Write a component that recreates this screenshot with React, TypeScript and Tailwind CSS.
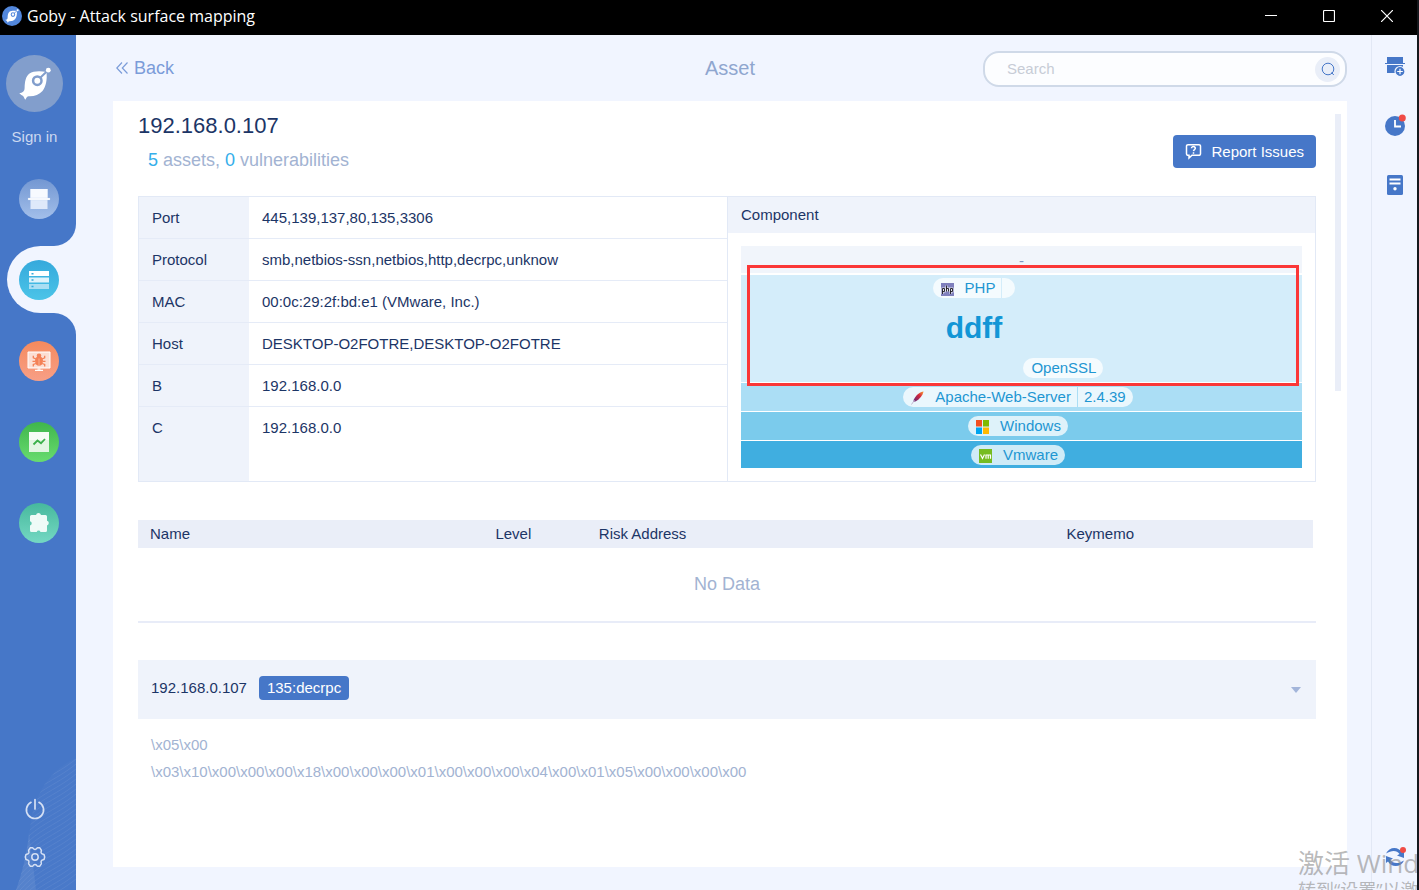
import { useState } from "react";
import type { ReactNode } from "react";
import { clsx } from "clsx";

const HOST_INFO = [
  { label: "Port", value: "445,139,137,80,135,3306" },
  { label: "Protocol", value: "smb,netbios-ssn,netbios,http,decrpc,unknow" },
  { label: "MAC", value: "00:0c:29:2f:bd:e1 (VMware, Inc.)" },
  { label: "Host", value: "DESKTOP-O2FOTRE,DESKTOP-O2FOTRE" },
  { label: "B", value: "192.168.0.0" },
  { label: "C", value: "192.168.0.0" },
];

const BANNER = [
  "\\x05\\x00",
  "\\x03\\x10\\x00\\x00\\x00\\x18\\x00\\x00\\x00\\x01\\x00\\x00\\x00\\x04\\x00\\x01\\x05\\x00\\x00\\x00\\x00",
];

function GobyFish({ className, ring }: { className: string; ring: string }) {
  return (
    <svg viewBox="10 10 38 38" className={className} aria-hidden="true">
      <path
        d="M40.500 17C34 15.800 27 16 23.500 18.500 19.500 21.500 18.800 27 18.600 33 18.500 36.500 16.500 38 13.300 38 14.300 39.800 16.300 40.200 17.300 41.200 18 42 18.200 43.500 19.300 44.800 20.300 43.500 20.300 41.500 22.500 41.200 28 41.500 33 40 36.500 36 40 31.500 41.300 25 40.500 17Z"
        fill="#fff"
      />
      <path d="M34 23 42 15.300" stroke={ring} strokeWidth="2" />
      <circle cx="31.300" cy="25.700" r="4.200" fill="#fff" stroke={ring} strokeWidth="2.500" />
      <circle cx="42.300" cy="15.200" r="2.400" fill="#fff" />
    </svg>
  );
}

function ScanIcon() {
  return (
    <svg viewBox="0 0 24 24" className="size-6" aria-hidden="true">
      <path d="M3.500 2h17v20h-17z" fill="#dfe9fa" />
      <path d="M3.500 2h17v9h-17z" fill="#f7faff" />
      <path d="M1 11h22v2H1z" fill="#fff" stroke="#b9cdee" strokeWidth=".3" />
    </svg>
  );
}

function AssetIcon() {
  return (
    <svg viewBox="0 0 24 24" className="size-6" aria-hidden="true">
      <path d="M2 3h20v5H2z" fill="#fff" />
      <path d="M2 9.500h20v5H2z" fill="#dff3fb" />
      <path d="M2 16h20v5H2z" fill="#a9def3" />
      <path d="M4.500 5h2v1.500h-2zM4.500 11.300h2v1.500h-2zM4.500 17.800h2v1.500h-2z" fill="#35a9dc" />
    </svg>
  );
}

function BugScreenIcon() {
  return (
    <svg viewBox="0 0 24 24" className="size-6" aria-hidden="true">
      <path d="M1 3h22v16H1z" fill="#fff" fillOpacity=".7" stroke="#fff" strokeWidth="1" />
      <path d="M8 21.300h8M10.500 20h3" stroke="#fff" strokeWidth="1.200" />
      <ellipse cx="12" cy="12" rx="4" ry="4.800" fill="#f48157" />
      <circle cx="12" cy="6.800" r="2.300" fill="#f48157" />
      <path
        d="M6.300 6.800v2L9 10M17.700 6.800v2L15 10M5.500 12.300H8m8 0h2.500M6.300 17.500v-2L9 14.500m8.700 3v-2L15 14.500"
        fill="none"
        stroke="#f48157"
        strokeWidth="1.300"
      />
      <path d="M12 9.500v7" stroke="#fbc3ad" strokeWidth=".7" />
    </svg>
  );
}

function ReportIcon() {
  return (
    <svg viewBox="0 0 24 24" className="size-6" aria-hidden="true">
      <path d="M2 2h20v20H2z" fill="#e3f6e3" />
      <path d="M2 2h20v8H2z" fill="#f6fcf6" />
      <path d="M6.500 14.500l4-4 3.500 2.700L18 9" fill="none" stroke="#3bb04a" strokeWidth="1.800" />
    </svg>
  );
}

function PuzzleIcon() {
  return (
    <svg viewBox="0 0 24 24" className="size-6" aria-hidden="true">
      <path
        d="M4.500 4H9a2.600 2.600 0 0 1 5 0h4.500A1.500 1.500 0 0 1 20 5.500v4.200a2.500 2.500 0 0 1 0 4.800V19.500a1.500 1.500 0 0 1-1.500 1.500h-5a2 2 0 0 0-3.800 0H4.500A1.500 1.500 0 0 1 3 19.500V14.500a2.200 2.200 0 0 0 0-4.300V5.500A1.500 1.500 0 0 1 4.500 4Z"
        fill="#effbf7"
      />
    </svg>
  );
}

const NAV_ITEMS: { id: string; color: string; icon: ReactNode }[] = [
  { id: "Scan", color: "bg-linear-to-b from-[#7397d2] to-[#a3bfea]", icon: <ScanIcon /> },
  { id: "Assets", color: "bg-linear-to-b from-[#35a9dc] to-[#4bc4e8]", icon: <AssetIcon /> },
  { id: "Vulnerabilities", color: "bg-linear-to-b from-[#f58a5d] to-[#f79f86]", icon: <BugScreenIcon /> },
  { id: "Report", color: "bg-linear-to-b from-[#3fb64c] to-[#68dc6f]", icon: <ReportIcon /> },
  { id: "Extensions", color: "bg-linear-to-b from-[#46b99d] to-[#74d8c3]", icon: <PuzzleIcon /> },
];

function TitleBar() {
  return (
    <header className="flex h-[35px] shrink-0 items-center bg-black pb-[3px] pl-0.5 text-white">
      <span className="flex size-5 items-center justify-center rounded-full bg-[#5287dc]">
        <GobyFish className="size-4" ring="#5287dc" />
      </span>
      <span className="ml-[5px] font-['Open_Sans','Noto_Sans',sans-serif] text-[16px] leading-5">
        Goby - Attack surface mapping
      </span>
      <div className="ml-auto flex pr-px">
        <button type="button" aria-label="Minimize" className="flex h-8 w-[58px] items-center justify-center">
          <svg viewBox="0 0 12 12" className="size-3"><path d="M0 5.500h12" stroke="#fff" /></svg>
        </button>
        <button type="button" aria-label="Maximize" className="flex h-8 w-[58px] items-center justify-center">
          <svg viewBox="0 0 12 12" className="size-3">
            <rect x=".5" y=".5" width="11" height="11" rx="1" fill="none" stroke="#fff" strokeWidth="1.200" />
          </svg>
        </button>
        <button type="button" aria-label="Close" className="flex h-8 w-[58px] items-center justify-center">
          <svg viewBox="0 0 12 12" className="size-3"><path d="M0 0l12 12M12 0 0 12" stroke="#fff" strokeWidth="1.200" /></svg>
        </button>
      </div>
    </header>
  );
}

function Waves() {
  const lines = Array.from({ length: 26 }, (_, i) => i * 5);
  return (
    <svg viewBox="0 0 76 140" className="pointer-events-none absolute right-0 bottom-0 h-[140px] w-[76px]" aria-hidden="true">
      <path d="M76 8C50 20 36 42 31 70 28 98 22 122 16 140H76Z" fill="#fff" fillOpacity=".02" />
      <path d="M29 82c-2 22-7 42-13 58h20c-2-20-5-38-7-58Z" fill="#fff" fillOpacity=".07" />
      <g clipPath="url(#wave-clip)" fill="none" stroke="#fff" strokeOpacity=".07">
        {lines.map((y) => (
          <path key={y} d={`M16 ${y + 50}C36 ${y + 24} 54 ${y + 22} 76 ${y + 4}`} />
        ))}
      </g>
      <clipPath id="wave-clip">
        <path d="M76 8C50 20 36 42 31 70 28 98 22 122 16 140H76Z" />
      </clipPath>
    </svg>
  );
}

function Sidebar({ active, onSelect }: { active: string; onSelect: (id: string) => void }) {
  return (
    <aside className="relative flex w-[76px] shrink-0 flex-col bg-[#4677c8] pt-5 pb-[22px]">
      <Waves />
      <button type="button" className="ml-1.5 flex w-[57px] flex-col items-center text-[15px] leading-5 text-[#ccd9f0]">
        <span className="flex size-[57px] items-center justify-center rounded-full bg-[#829ecc]">
          <GobyFish className="size-[38px]" ring="#829ecc" />
        </span>
        <span className="mt-[15px] whitespace-nowrap">Sign in</span>
      </button>
      <nav className="mt-[11px] flex flex-col">
        {NAV_ITEMS.map(({ id, color, icon }) => (
          <div key={id} className="flex h-[81px] items-center">
            <div
              className={clsx(
                "relative ml-[7px] flex h-[67px] grow items-center rounded-l-full pl-3",
                id === active && "bg-[#f1f5ff]"
              )}
            >
              {id === active && (
                <>
                  <span className="absolute -top-[22px] right-0 size-[22px] bg-[#f1f5ff]">
                    <span className="block size-full rounded-br-full bg-[#4677c8]" />
                  </span>
                  <span className="absolute right-0 -bottom-[22px] size-[22px] bg-[#f1f5ff]">
                    <span className="block size-full rounded-tr-full bg-[#4677c8]" />
                  </span>
                </>
              )}
              <button
                type="button"
                aria-label={id}
                onClick={() => onSelect(id)}
                className={clsx("flex size-10 items-center justify-center rounded-full", color)}
              >
                {icon}
              </button>
            </div>
          </div>
        ))}
      </nav>
      <div className="relative mt-auto flex w-[69px] flex-col items-center gap-[26px]">
        <button type="button" aria-label="Quit">
          <svg viewBox="0 0 22 22" className="size-[22px]" fill="none" stroke="#d5e0f4" strokeWidth="1.700" strokeLinecap="round">
            <path d="M11 1.500v9.500M7 4.300a8.600 8.600 0 1 0 8 0" />
          </svg>
        </button>
        <button type="button" aria-label="Settings">
          <svg viewBox="0 0 22 22" className="size-[22px]" fill="none" stroke="#d5e0f4" strokeWidth="1.500" strokeLinejoin="round">
            <path d="M6.200 1.800h2.300c.7 0 .8 1.700 2.500 1.700s1.800-1.700 2.500-1.700h2.300l1.500 2.400c.4.700-.8 1.500 0 3 .9 1.500 2.400.8 2.800 1.500l.6 2.300-.6 2.300c-.4.700-1.900 0-2.800 1.500-.8 1.500.4 2.300 0 3l-1.500 2.400h-2.300c-.7 0-.8-1.700-2.500-1.700s-1.800 1.700-2.500 1.700H6.200l-1.500-2.400c-.4-.7.8-1.500 0-3-.9-1.500-2.400-.8-2.800-1.500L1.300 11l.6-2.300c.4-.7 1.900 0 2.800-1.500.8-1.500-.4-2.300 0-3Z" />
            <circle cx="11" cy="11" r="3.200" />
          </svg>
        </button>
      </div>
    </aside>
  );
}

function Toolbar() {
  return (
    <div className="grid h-[66px] shrink-0 grid-cols-3 items-center">
      <a href="#assets" className="ml-[3px] flex items-center gap-1.5 justify-self-start text-[18px] leading-6 text-[#7b9cd9]">
        <svg viewBox="0 0 12 12" className="size-3" fill="none" stroke="currentColor" strokeWidth="1.200">
          <path d="M6 .5.800 6 6 11.500M11.500.5 6.300 6l5.200 5.500" />
        </svg>
        Back
      </a>
      <h2 className="text-center text-[20px] leading-6 text-[#8fa6cf]">Asset</h2>
      <form
        className="mt-0.5 flex h-9 w-[364px] items-center justify-self-end rounded-2xl border-2 border-[#cfd9e8] bg-[#fcfdff] pr-[5px]"
        onSubmit={(e) => e.preventDefault()}
      >
        <input
          type="search"
          aria-label="Search"
          placeholder="Search"
          className="min-w-0 grow bg-transparent pl-[22px] text-[15px] leading-5 outline-none placeholder:text-[#c7ccd6]"
        />
        <button type="submit" aria-label="Run search" className="flex size-[25px] items-center justify-center rounded-full bg-[#e9eef8]">
          <svg viewBox="0 0 14 14" className="size-3.5" fill="none" stroke="#4677c8">
            <circle cx="7" cy="7" r="5.800" />
            <path d="M10.500 10.500l2.300 2.500" />
          </svg>
        </button>
      </form>
    </div>
  );
}

function InfoTable() {
  return (
    <table className="w-full border-separate border-spacing-0 text-left text-[15px] leading-5 text-[#1c3566]">
      <tbody>
        {HOST_INFO.map(({ label, value }) => (
          <tr key={label} className="group">
            <th className="h-[42px] w-[110px] border-b border-[#e5ebf7] bg-[#eff3fb] pl-[13px] font-normal group-last:h-[74px] group-last:border-b-0 group-last:pt-[11px] group-last:align-top">
              {label}
            </th>
            <td className="h-[42px] border-b border-[#e5ebf7] pl-[13px] group-last:border-b-0 group-last:pt-[11px] group-last:align-top">
              {value}
            </td>
          </tr>
        ))}
      </tbody>
    </table>
  );
}

interface PillProps {
  name: string;
  icon?: ReactNode;
  version?: string;
  divider?: string;
}

function Pill({ name, icon, version, divider }: PillProps) {
  return (
    <span className="flex h-5 items-center rounded-[10px] bg-white/75 pr-[7px] pl-2 text-[15px] leading-5 whitespace-nowrap text-[#1e96d2]">
      {icon && <span className="mt-0.5 mr-[11px] block w-[13px]">{icon}</span>}
      {name}
      {version !== undefined && (
        <span className={clsx("ml-1.5 h-5 border-l pl-1.5", divider)}>{version}</span>
      )}
    </span>
  );
}

const phpIcon = (
  <svg viewBox="0 0 13 13" className="size-[13px]">
    <rect width="13" height="13" fill="#7f80bd" />
    <g fill="none" stroke="#e4e4f2" strokeWidth="2">
      <path d="M1.500 11V5.500h2v3h-2M5.500 2.500v6M5.500 5.500h2v3M9.500 11V5.500h2v3h-2" />
    </g>
    <g fill="none" stroke="#16161d" strokeWidth=".9">
      <path d="M1.500 11V5.500h2v3h-2M5.500 2.500v6M5.500 5.500h2v3M9.500 11V5.500h2v3h-2" />
    </g>
  </svg>
);

const apacheIcon = (
  <svg viewBox="0 0 13 14" className="h-3.5 w-[13px]">
    <defs>
      <linearGradient id="feather" x1="1" y1="0" x2="0" y2="1">
        <stop offset="0" stopColor="#f7a033" />
        <stop offset=".4" stopColor="#d4263c" />
        <stop offset=".8" stopColor="#7a2a6b" />
        <stop offset="1" stopColor="#a98fc0" />
      </linearGradient>
    </defs>
    <path d="M12.600.500C9 1 5 4 2.800 8.500L2 11l2.500-.6C9 8 11.500 4.500 12.600.500Z" fill="url(#feather)" />
    <path d="M3.500 9 .5 13.500" stroke="#b9a6c9" strokeWidth=".8" />
  </svg>
);

const windowsIcon = (
  <svg viewBox="0 0 13 14" className="h-3.5 w-[13px]">
    <path d="M0 0h6v6.500H0z" fill="#f25022" />
    <path d="M7 0h6v6.500H7z" fill="#7fba00" />
    <path d="M0 7.500h6V14H0z" fill="#00a4ef" />
    <path d="M7 7.500h6V14H7z" fill="#ffb900" />
  </svg>
);

const vmwareIcon = (
  <svg viewBox="0 0 13 14" className="h-3.5 w-[13px]">
    <rect width="13" height="14" fill="#76bc21" />
    <path d="M1.500 5.500 3.500 9.500 5.500 5.500M7 9.800V6h2.200v3.800V6h2.300v3.800" fill="none" stroke="#fff" strokeWidth="1.200" />
  </svg>
);

function ComponentStack() {
  return (
    <div className="relative">
      <div className="mb-0.5 flex h-[27px] items-center justify-center bg-[#f1f5fb] pt-1 text-[15px] text-[#7f97c0]">-</div>
      <div className="mb-px flex items-end justify-center gap-2 bg-[#d4edfa] pt-[3px] pr-[7px] pb-1">
        <div className="mb-[35px] flex flex-col items-center">
          <Pill name="PHP" icon={phpIcon} version="" divider="border-[#d4edfa]" />
          <h1 className="mt-[15px] text-[30px] leading-[30px] font-bold text-[#1296d6]">ddff</h1>
        </div>
        <Pill name="OpenSSL" />
      </div>
      <div className="mb-px flex h-7 justify-center bg-[#abdef5] pt-1 pr-[7px]">
        <Pill name="Apache-Web-Server" icon={apacheIcon} version="2.4.39" divider="border-[#abdef5]" />
      </div>
      <div className="mb-px flex h-7 justify-center bg-[#7bcbec] pt-1 pr-[7px]">
        <Pill name="Windows" icon={windowsIcon} />
      </div>
      <div className="flex h-[27px] justify-center bg-[#40aee0] pt-1 pr-[7px]">
        <Pill name="Vmware" icon={vmwareIcon} />
      </div>
      {/* highlight frame over the injected layer */}
      <div className="pointer-events-none absolute top-[19px] right-[3px] left-1.5 h-[121px] border-3 border-[#fb3737]" />
    </div>
  );
}

function VulnTable() {
  return (
    <div className="mt-[38px] border-b-2 border-[#e8ecf8] text-[15px] leading-5">
      <div className="pr-[3px]">
        <table className="w-full table-fixed text-left text-[#1c3566]">
          <thead>
            <tr className="h-7 bg-[#eaeef8]">
              <th className="w-[29.4%] pl-3 font-normal">Name</th>
              <th className="w-[8.8%] pl-3 font-normal">Level</th>
              <th className="w-[39.8%] pl-3 font-normal">Risk Address</th>
              <th className="pl-3 font-normal">Keymemo</th>
            </tr>
          </thead>
        </table>
      </div>
      <p className="py-6 text-center text-[18px] leading-[25px] text-[#a2b3d2]">No Data</p>
    </div>
  );
}

function ServicePanel() {
  const [open, setOpen] = useState(true);
  return (
    <section className="mt-[37px] text-[15px]">
      <button
        type="button"
        aria-expanded={open}
        onClick={() => setOpen(!open)}
        className="flex h-[59px] w-full items-center bg-[#eff3fb] pr-[15px] pb-[3px] pl-[13px]"
      >
        <span className="leading-5 text-[#1c3566]">192.168.0.107</span>
        <span className="ml-3 rounded-[4px] bg-[#4677c8] px-2 text-[15px] leading-6 text-white">135:decrpc</span>
        <svg viewBox="0 0 10 6" className="mt-1 ml-auto h-1.5 w-2.5"><path d="M0 0h10L5 6z" fill="#a3b5da" /></svg>
      </button>
      {open && (
        <div className="px-[13px] pt-3 leading-[27px] text-[#a2b3d2]">
          {BANNER.map((line) => (
            <p key={line} className="break-all">{line}</p>
          ))}
        </div>
      )}
    </section>
  );
}

function RightRail() {
  return (
    <aside className="flex w-[46px] shrink-0 flex-col items-center border-l border-[#e2e8f5] pt-5 pb-[22px]">
      <button type="button" aria-label="New scan">
        <svg viewBox="0 0 22 22" className="size-[22px]">
          <path d="M3 2h16v6H3zM3 10h16v8H3z" fill="#4677c8" />
          <path d="M1 8.500h20" stroke="#4677c8" />
          <circle cx="16" cy="16.500" r="5" fill="#4677c8" stroke="#f1f5ff" strokeWidth="1.200" />
          <path d="M16 13.700v5.600M13.200 16.500h5.600" stroke="#fff" strokeWidth="1.200" />
        </svg>
      </button>
      <button type="button" aria-label="History" className="mt-[37px]">
        <svg viewBox="0 0 22 22" className="size-[22px]">
          <circle cx="11" cy="12" r="10" fill="#4677c8" />
          <path d="M11 6v6.500h6" fill="none" stroke="#fff" strokeWidth="1.800" />
          <circle cx="18.300" cy="4" r="3.500" fill="#f04b46" />
        </svg>
      </button>
      <button type="button" aria-label="Logs" className="mt-[38px]">
        <svg viewBox="0 0 22 22" className="size-[22px]">
          <rect x="3" y="1" width="16" height="20" rx="1.500" fill="#4677c8" />
          <path d="M5.500 5.500h11M5.500 9.500h11" stroke="#fff" strokeWidth="2" />
          <circle cx="11" cy="14.800" r="1.700" fill="#fff" />
        </svg>
      </button>
      <button type="button" aria-label="Refresh" className="mt-auto">
        <svg viewBox="0 0 22 22" className="size-[22px]">
          <path d="M2 7.500C5 .5 14.500 0 18 6.500l2-1V12l-7-2.500 2.500-1.500C13 4 7.500 4 2 7.500Z" fill="#4677c8" />
          <path d="M20 14.500c-3 7-12.500 7.500-16 1l-2 1.500V10l7 2.500L6.500 14c2.500 4 8 4 13.500.5Z" fill="#4677c8" />
          <circle cx="19" cy="4" r="3" fill="#f04b46" />
        </svg>
      </button>
    </aside>
  );
}

export default function App() {
  const [active, setActive] = useState("Assets");

  return (
    <div className="relative flex min-h-screen flex-col overflow-hidden border-r-2 border-[#15181d] bg-[#f1f5ff] font-['Liberation_Sans',Arial,sans-serif]">
      <TitleBar />
      <div className="flex grow">
        <Sidebar active={active} onSelect={setActive} />

        <main className="flex min-w-0 grow flex-col pr-6 pb-[23px] pl-[37px]">
          <Toolbar />
          <div className="relative grow bg-white pt-[11px] pr-[31px] pb-6 pl-[25px]">
            <div className="absolute top-[13px] right-1.5 h-[277px] w-1.5 bg-[#eaeef8]" />

            <div className="flex items-end justify-between">
              <div>
                <h1 className="text-[22px] leading-7 text-[#1c3566]">192.168.0.107</h1>
                <p className="mt-2 pl-2.5 text-[18px] leading-6 text-[#a2b3d2]">
                  <span className="text-[#35aeea]">5</span> assets, <span className="text-[#35aeea]">0</span> vulnerabilities
                </p>
              </div>
              <button
                type="button"
                className="mb-1 flex h-[33px] items-center gap-[9px] rounded-[4px] bg-[#4677c8] px-3 text-[15px] leading-5 text-white"
              >
                <svg viewBox="0 0 17 17" className="size-[17px]" fill="none" stroke="#fff" strokeWidth="1.500">
                  <path d="M3 1.700h11A1.500 1.500 0 0 1 15.500 3.200v7.600a1.500 1.500 0 0 1-1.500 1.500H7L4 15v-2.700H3a1.500 1.500 0 0 1-1.500-1.500V3.200A1.500 1.500 0 0 1 3 1.700Z" />
                  <path d="M6.500 5.300c0-2.400 4-2.200 3.800.1-.1 1.200-1.700 1.200-1.800 2.700M8.500 9.200v1.600" />
                </svg>
                Report Issues
              </button>
            </div>

            <div className="mt-6 grid grid-cols-2 border border-[#e2e9f6]">
              <InfoTable />
              <div className="border-l border-[#e2e9f6]">
                <h3 className="bg-[#eff3fb] pl-[13px] text-[15px] leading-9 text-[#1c3566]">Component</h3>
                <div className="p-[13px]">
                  <ComponentStack />
                </div>
              </div>
            </div>

            <VulnTable />
            <ServicePanel />
          </div>
        </main>

        <RightRail />
      </div>

      {/* OS activation notice, runs off the window edge */}
      <div className="pointer-events-none absolute right-0 bottom-0 h-[42px] w-[119px] overflow-hidden font-['Open_Sans','Noto_Sans_CJK_SC',sans-serif] whitespace-nowrap text-[#8c8c8c]/60">
        <p className="text-[26px] leading-[30px]">激活 Windows</p>
        <p className="text-[18px] leading-6">转到“设置”以激活 Windows。</p>
      </div>
    </div>
  );
}
